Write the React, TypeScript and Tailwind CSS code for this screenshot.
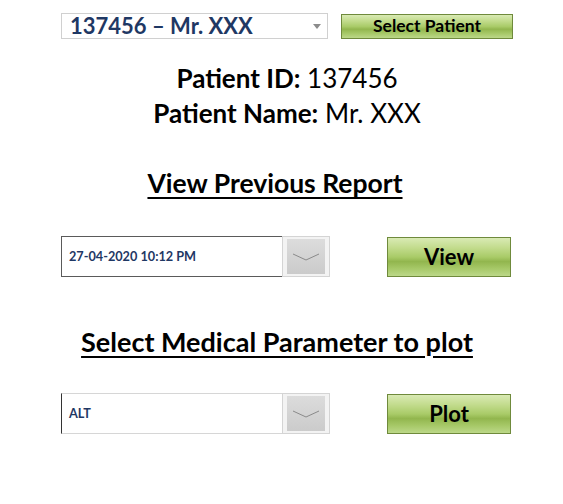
import React from "react";

const font = { fontFamily: "Lato, 'Open Sans', sans-serif" };

function GreenButton({ label, className, textClass }: { label: string; className: string; textClass: string }) {
  return (
    <div
      className={`relative flex items-center justify-center border border-[#6f8a3c] bg-[linear-gradient(to_bottom,#d9eab4_0%,#c3dc8e_25%,#a9cb68_50%,#92b64e_62%,#a6c867_80%,#bcd889_100%)] ${className}`}
    >
      <span className={`font-bold leading-none text-black ${textClass}`}>{label}</span>
    </div>
  );
}

function Combo({ value, light }: { value: string; light?: boolean }) {
  return (
    <div className="flex h-[41px] w-[269px]">
      <div
        className={`flex flex-1 items-center border-y border-l bg-white pl-[7px] ${
          light ? "border-y-[#d6d6d6] border-l-[#333333]" : "border-[#5a5a5a]"
        }`}
      >
        <span className="text-[12.7px] font-bold text-[#1f3864]">{value}</span>
      </div>
      <div className="flex w-[48px] items-center justify-center border border-[#d4d4d4] bg-[#f3f3f3]">
        <div className="flex h-[35px] w-[38px] items-center justify-center bg-[linear-gradient(to_bottom,#dcdcdc,#cbcbcb)]">
          <svg width="30" height="10" viewBox="0 0 30 10">
            <polyline points="2,2 15,8 28,2" fill="none" stroke="#8a8a8a" strokeWidth="1" />
          </svg>
        </div>
      </div>
    </div>
  );
}

export default function App() {
  return (
    <div className="h-[504px] w-[563px] bg-white" style={font}>
      <div className="flex items-center pl-[61px] pt-[13px]">
        <div className="flex h-[26px] w-[267px] items-center justify-between border border-[#d0d0d0] bg-white pl-[8px] pr-[6px]">
          <span className="text-[22px] font-bold leading-none text-[#1f3864]">137456 – Mr. XXX</span>
          <svg width="8" height="5" viewBox="0 0 8 5">
            <polygon points="0,0 8,0 4,5" fill="#8c8c8c" />
          </svg>
        </div>
        <GreenButton label="Select Patient" className="ml-[13px] h-[25px] w-[172px]" textClass="text-[17.5px]" />
      </div>

      <div className="mt-[22px] flex flex-col items-center pl-[11px] text-[26px] leading-[35px] text-black">
        <div>
          <span className="font-bold">Patient ID:</span> 137456
        </div>
        <div>
          <span className="font-bold">Patient Name:</span> Mr. XXX
        </div>
      </div>

      <div className="mt-[36px] flex justify-center pr-[13px] leading-[32px]">
        <span className="text-[26.5px] font-bold text-black underline decoration-[2px] underline-offset-[4px]">View Previous Report</span>
      </div>

      <div className="mt-[37px] flex items-center pl-[61px]">
        <Combo value="27-04-2020 10:12 PM" />
        <GreenButton label="View" className="ml-[57px] h-[40px] w-[124px]" textClass="text-[22px]" />
      </div>

      <div className="mt-[49px] flex justify-center pr-[9px] leading-[32px]">
        <span className="text-[27px] font-bold text-black underline decoration-[2px] underline-offset-[4px]">Select Medical Parameter to plot</span>
      </div>

      <div className="mt-[35px] flex items-center pl-[61px]">
        <Combo value="ALT" light />
        <GreenButton label="Plot" className="ml-[57px] h-[40px] w-[124px]" textClass="text-[22px]" />
      </div>
    </div>
  );
}
